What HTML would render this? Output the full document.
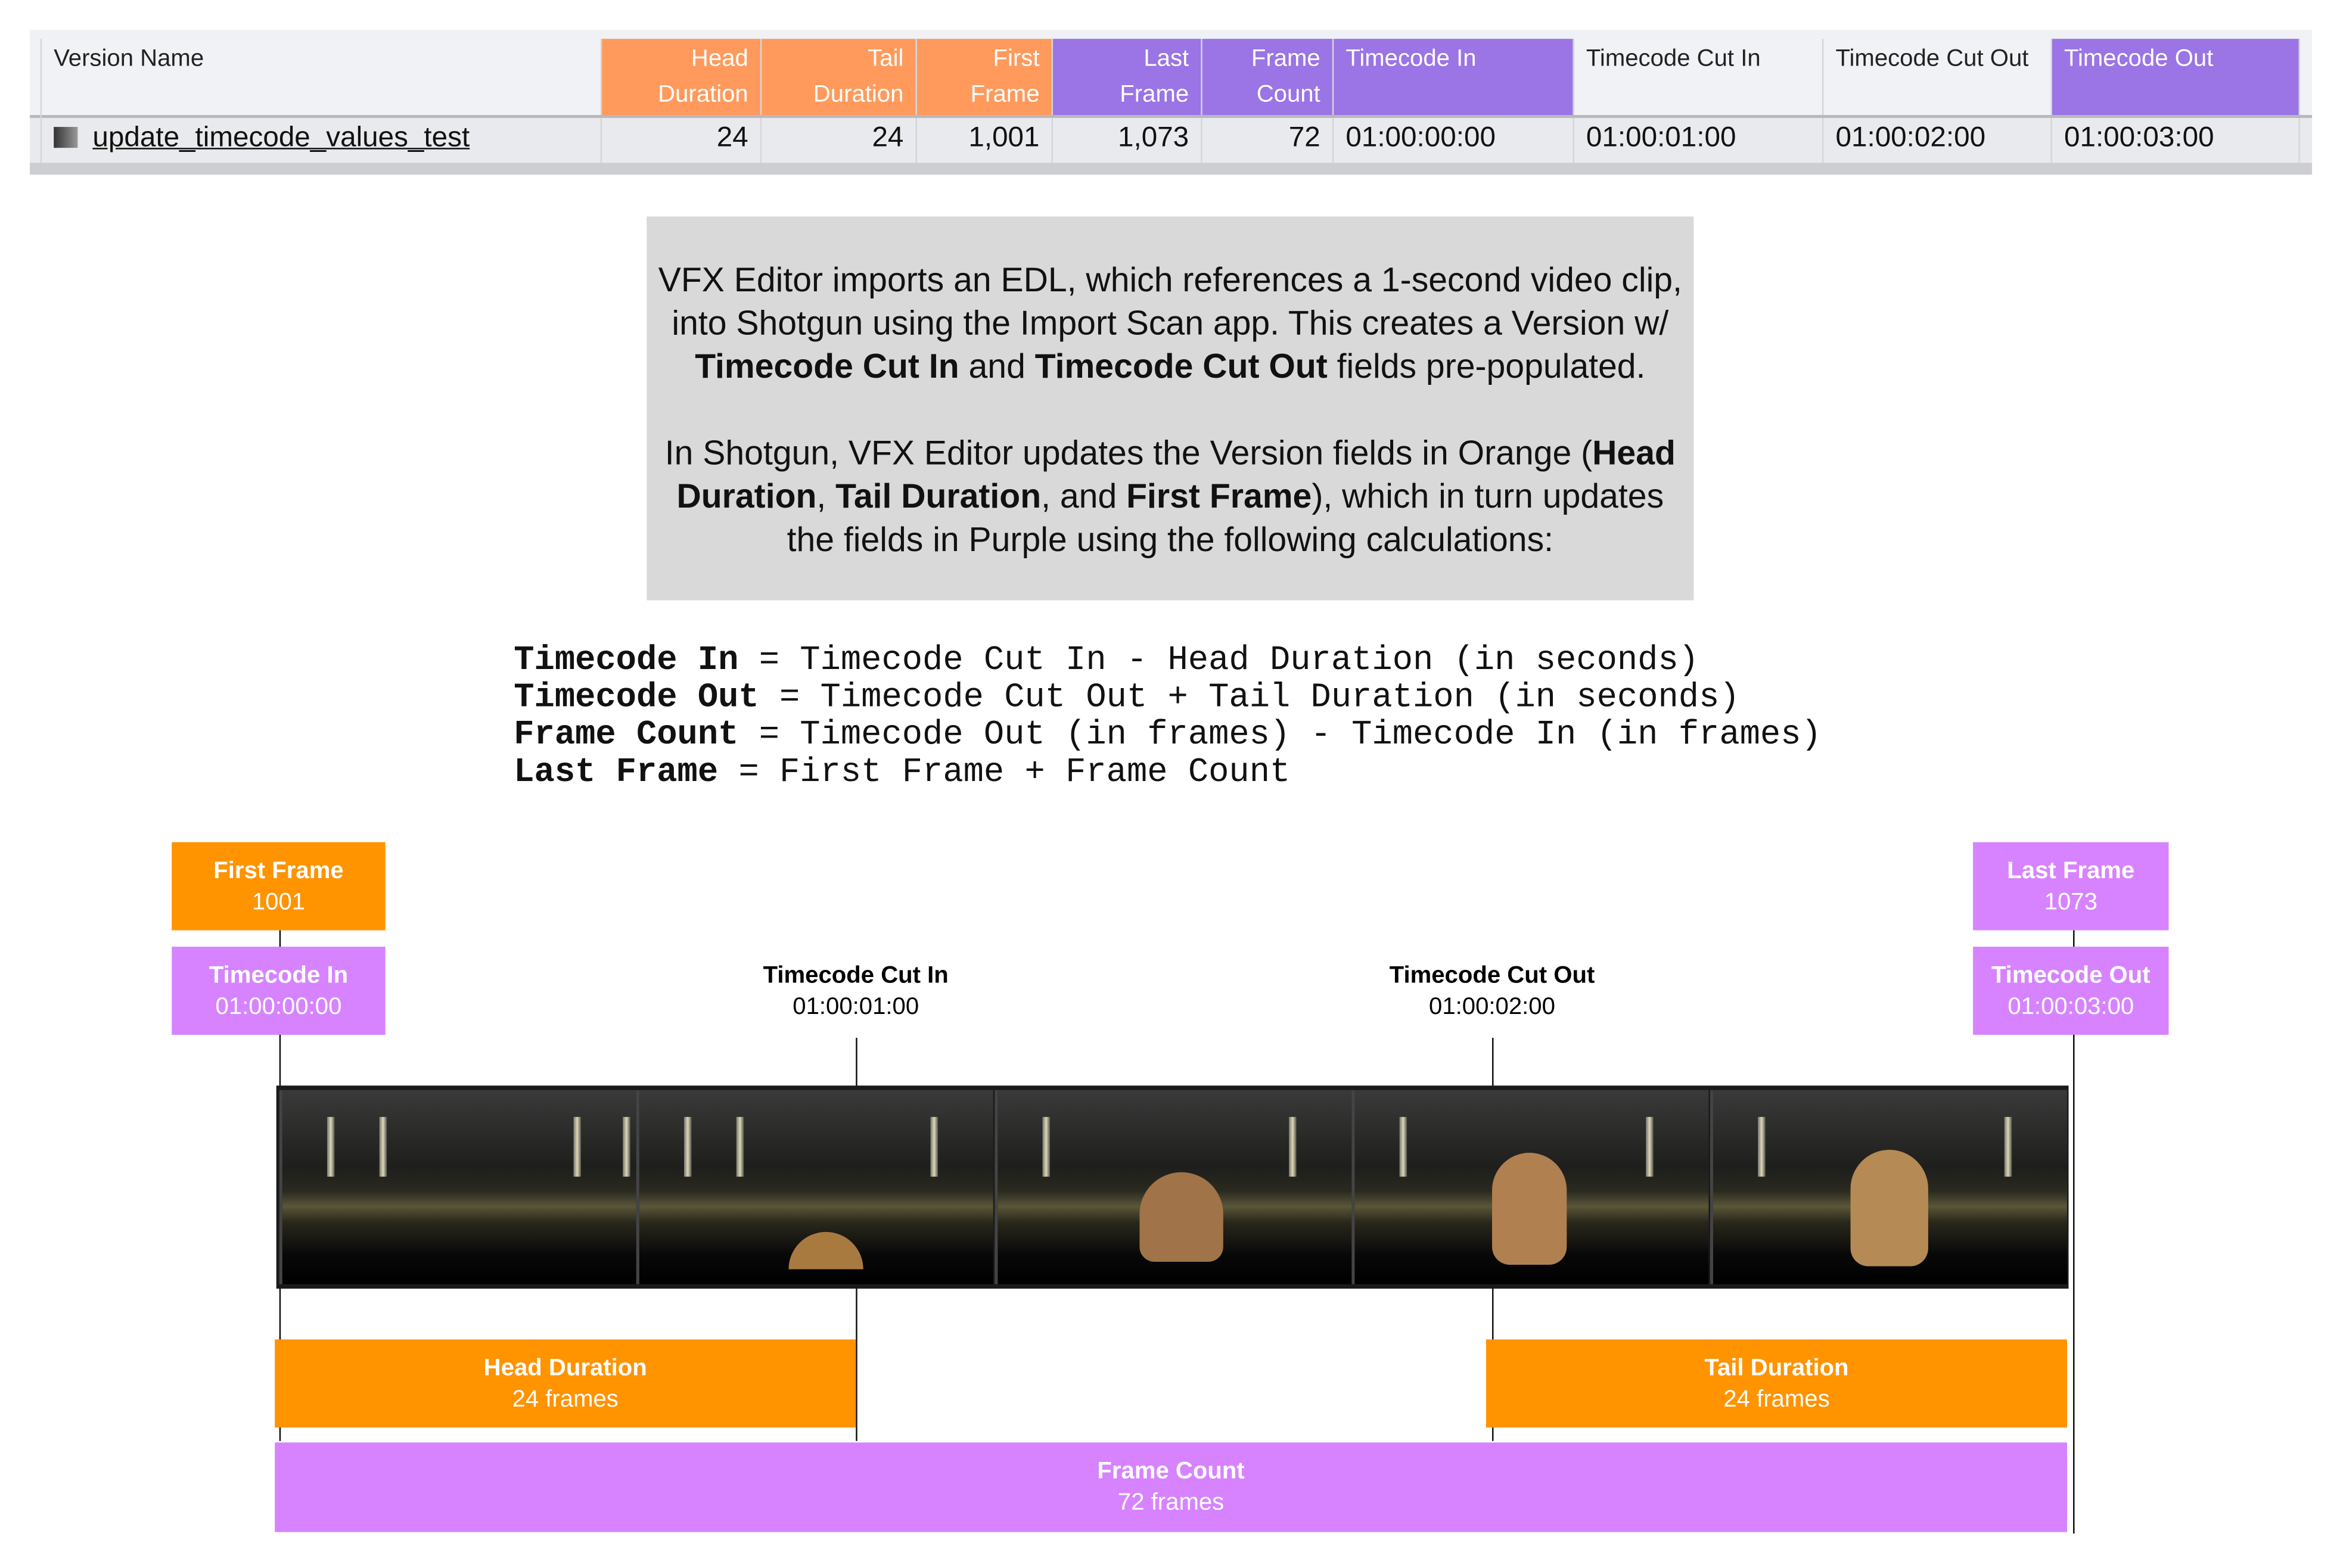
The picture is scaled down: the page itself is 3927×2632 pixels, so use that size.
<!DOCTYPE html>
<html><head><meta charset="utf-8">
<style>
html,body{margin:0;padding:0;background:#fff;overflow:hidden;width:3927px;height:2630px}
#w{position:absolute;left:0;top:0;width:1567px;height:1050px;transform:scale(2.5065);transform-origin:0 0;font-family:"Liberation Sans",Arial,sans-serif}
.a{position:absolute}
.th{position:absolute;top:26px;height:51px;font-size:16px;line-height:24px;padding:2px 8px;box-sizing:border-box;color:#222;border-right:1px solid #d6d6da}
.o{background:#ff9a5c;color:#fff;text-align:right}
.p{background:#9b74e6;color:#fff}
.r{text-align:right}
.td{position:absolute;top:79px;height:30px;font-size:19px;line-height:28px;padding:0 8px;box-sizing:border-box;color:#111;border-right:1px solid #d6d6da}
.box{position:absolute;color:#fff;text-align:center;font-size:16px;line-height:21px;box-sizing:border-box;padding-top:9px}
.box b{display:block}
.or{background:#ff9300}.pu{background:#d783ff}
.vl{position:absolute;width:1.3px;background:#111}
.fr{position:absolute;top:3px;height:130px;width:237px;background:linear-gradient(#3a3a3a 0%,#1e1e1c 40%,#2a2a20 52%,#5a5638 60%,#2a281c 68%,#080808 85%,#000 100%);border-left:2px solid #444}
.pil{position:absolute;top:18px;width:5px;height:40px;background:linear-gradient(90deg,#777,#ddd8b0,#555)}
</style></head><body><div id="w">
<div class="a" style="left:20px;top:20px;width:1528px;height:6px;background:#f0f1f4"></div>
<div class="a" style="left:20px;top:26px;width:1528px;height:51px;background:#f1f2f5"></div>
<div class="a" style="left:20px;top:77px;width:1528px;height:2px;background:#b8b9bc"></div>
<div class="a" style="left:20px;top:79px;width:1528px;height:30px;background:#e9eaed"></div>
<div class="a" style="left:20px;top:109px;width:1528px;height:8px;background:#cdced1"></div>
<div class="a" style="left:27px;top:26px;width:1px;height:83px;background:#d6d6da"></div>
<div class="th" style="left:28px;width:375px">Version Name</div>
<div class="th o" style="left:403px;width:107px">Head<br>Duration</div>
<div class="th o" style="left:510px;width:104px">Tail<br>Duration</div>
<div class="th o" style="left:614px;width:91px">First<br>Frame</div>
<div class="th p r" style="left:705px;width:100px">Last<br>Frame</div>
<div class="th p r" style="left:805px;width:88px">Frame<br>Count</div>
<div class="th p" style="left:893px;width:161px">Timecode In</div>
<div class="th" style="left:1054px;width:167px">Timecode Cut In</div>
<div class="th" style="left:1221px;width:153px">Timecode Cut Out</div>
<div class="th p" style="left:1374px;width:166px">Timecode Out</div>
<div class="td" style="left:28px;width:375px"><span style="display:inline-block;width:16px;height:14px;background:linear-gradient(90deg,#333,#999);vertical-align:-1px;margin-right:10px"></span><span style="text-decoration:underline">update_timecode_values_test</span></div>
<div class="td r" style="left:403px;width:107px">24</div>
<div class="td r" style="left:510px;width:104px">24</div>
<div class="td r" style="left:614px;width:91px">1,001</div>
<div class="td r" style="left:705px;width:100px">1,073</div>
<div class="td r" style="left:805px;width:88px">72</div>
<div class="td" style="left:893px;width:161px">01:00:00:00</div>
<div class="td" style="left:1054px;width:167px">01:00:01:00</div>
<div class="td" style="left:1221px;width:153px">01:00:02:00</div>
<div class="td" style="left:1374px;width:166px">01:00:03:00</div>
<div class="a" style="left:433px;top:145px;width:701px;height:257px;background:#d9d9d9;text-align:center;font-size:22.8px;line-height:29px;color:#111;box-sizing:border-box;padding-top:28px;white-space:nowrap">
VFX Editor imports an EDL, which references a 1-second video clip,<br>into Shotgun using the Import Scan app. This creates a Version w/<br><b>Timecode Cut In</b> and <b>Timecode Cut Out</b> fields pre-populated.<br><br>In Shotgun, VFX Editor updates the Version fields in Orange (<b>Head<br>Duration</b>, <b>Tail Duration</b>, and <b>First Frame</b>), which in turn updates<br>the fields in Purple using the following calculations:</div>
<div class="a" style="left:344px;top:430px;font-family:'Liberation Mono',monospace;font-size:22.8px;line-height:25px;color:#111;white-space:pre"><b>Timecode In</b> = Timecode Cut In - Head Duration (in seconds)
<b>Timecode Out</b> = Timecode Cut Out + Tail Duration (in seconds)
<b>Frame Count</b> = Timecode Out (in frames) - Timecode In (in frames)
<b>Last Frame</b> = First Frame + Frame Count</div>
<div class="vl" style="left:187px;top:623px;height:342px"></div>
<div class="vl" style="left:572.5px;top:695px;height:270px"></div>
<div class="vl" style="left:998.5px;top:695px;height:270px"></div>
<div class="vl" style="left:1387.5px;top:623px;height:404px"></div>
<div class="box or" style="left:115px;top:564px;width:143px;height:59px"><b>First Frame</b>1001</div>
<div class="box pu" style="left:115px;top:634px;width:143px;height:59px"><b>Timecode In</b>01:00:00:00</div>
<div class="box pu" style="left:1321px;top:564px;width:131px;height:59px"><b>Last Frame</b>1073</div>
<div class="box pu" style="left:1321px;top:634px;width:131px;height:59px"><b>Timecode Out</b>01:00:03:00</div>
<div class="box" style="left:473px;top:634px;width:200px;color:#000"><b>Timecode Cut In</b>01:00:01:00</div>
<div class="box" style="left:899px;top:634px;width:200px;color:#000"><b>Timecode Cut Out</b>01:00:02:00</div>
<div class="a" style="left:185px;top:727px;width:1200px;height:136px;background:#1a1a1a;overflow:hidden">
<div class="fr" style="left:2px"><div class="pil" style="left:30px"></div><div class="pil" style="left:65px"></div><div class="pil" style="left:195px"></div><div class="pil" style="left:228px"></div></div>
<div class="fr" style="left:241px"><div class="pil" style="left:30px"></div><div class="pil" style="left:65px"></div><div class="pil" style="left:195px"></div><div class="a" style="left:100px;top:95px;width:50px;height:25px;border-radius:25px 25px 0 0;background:#a87a40"></div></div>
<div class="fr" style="left:481px"><div class="pil" style="left:30px"></div><div class="pil" style="left:195px"></div><div class="a" style="left:95px;top:55px;width:56px;height:60px;border-radius:28px 28px 10px 10px;background:#a07448"></div></div>
<div class="fr" style="left:720px"><div class="pil" style="left:30px"></div><div class="pil" style="left:195px"></div><div class="a" style="left:92px;top:42px;width:50px;height:75px;border-radius:25px 25px 12px 12px;background:#b08050"></div></div>
<div class="fr" style="left:960px"><div class="pil" style="left:30px"></div><div class="pil" style="left:195px"></div><div class="a" style="left:92px;top:40px;width:52px;height:78px;border-radius:26px 26px 12px 12px;background:#b58a55"></div></div>
</div>
<div class="box or" style="left:184px;top:897px;width:389px;height:59px"><b>Head Duration</b>24 frames</div>
<div class="box or" style="left:995px;top:897px;width:389px;height:59px"><b>Tail Duration</b>24 frames</div>
<div class="box pu" style="left:184px;top:966px;width:1200px;height:60px"><b>Frame Count</b>72 frames</div>
</div></body></html>
